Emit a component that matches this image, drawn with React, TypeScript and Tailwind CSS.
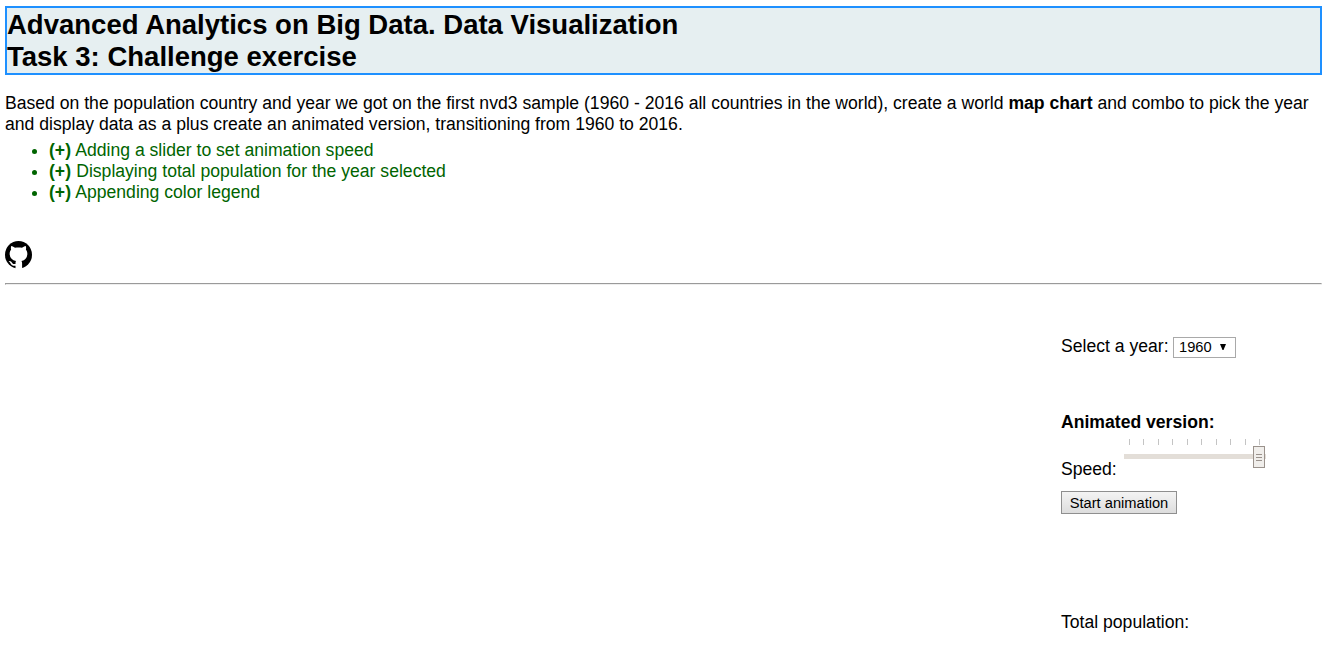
const FEATURES = [
  "Adding a slider to set animation speed",
  "Displaying total population for the year selected",
  "Appending color legend",
];

const TICKS = [5, 19, 34, 48, 63, 77, 92, 106, 121, 135];

function SpeedSlider() {
  return (
    <svg className="block h-[30px] w-[142px] shrink-0" viewBox="0 0 142 30" shapeRendering="crispEdges" role="img" aria-label="Animation speed">
      {TICKS.map((x) => (
        <rect key={x} x={x} y="0" width="1" height="6" fill="#c4c4c4" />
      ))}
      <rect x="0" y="15" width="142" height="5" fill="#e3ded8" />
      <rect x="129.5" y="7.5" width="11" height="21" fill="#f0eeeb" stroke="#9a928c" />
      <path d="M132 15.5h6M132 18.5h6M132 21.5h6" stroke="#9a928c" />
    </svg>
  );
}

function GithubMark() {
  return (
    <svg className="block h-[28px] w-[27px]" viewBox="0 0 27 28" aria-label="GitHub">
      <ellipse cx="13.5" cy="13.8" rx="13.5" ry="13.8" fill="#000" />
      <path
        d="M6.2 4.9C7.6 5 9 5.9 10 6.7C12.3 6.3 14.7 6.3 17 6.7C18 5.9 19.4 5 20.8 4.9C21.2 6.4 21.2 7.6 20.9 8.7C22 10 22.5 11.5 22.3 13.6C22 17.3 20 19.3 16.5 20C17 20.8 17.1 21.5 17.1 22.5V28H10.5V24.8C7.8 25 6.4 24 5.6 22.4C5 21.2 4.3 20.6 3.6 20.2C5.2 19.6 6.4 20.7 7.2 21.9C8 23.1 9.2 23.2 10.5 22.9C10.5 21.4 10.6 20.7 11 20C7.3 19.3 5 17.3 4.7 13.6C4.5 11.5 5 10 6.1 8.7C5.8 7.6 5.8 6.4 6.2 4.9Z"
        fill="#fff"
      />
    </svg>
  );
}

export default function App() {
  return (
    <div className="h-[663px] overflow-hidden bg-white pt-[6px] pr-[3px] pl-[5px] font-['Liberation_Sans',Arial,sans-serif] text-[17.6px] leading-[21px] text-black">
      <h1 className="h-[69px] border-2 border-[#1e90ff] bg-[#e6eff1] pt-px text-[27.52px] leading-[32px] font-bold whitespace-nowrap">
        Advanced Analytics on Big Data. Data Visualization
        <br />
        Task 3: Challenge exercise
      </h1>
      <p className="mt-[18px] whitespace-nowrap">
        Based on the population country and year we got on the first nvd3 sample (1960 - 2016 all countries in the world), create a world <b>map chart</b> and combo to pick the year
        <br />
        and display data as a plus create an animated version, transitioning from 1960 to 2016.
      </p>
      <ul className="mt-[5px] list-disc pl-[44px] text-[#006400]">
        {FEATURES.map((feature) => (
          <li key={feature}>
            <b className="mr-[0.3px]">(+)</b> {feature}
          </li>
        ))}
      </ul>
      <div className="mt-[38px]">
        <GithubMark />
      </div>
      <hr className="mt-[14px] h-[2px] border border-t-[#9a9a9a] border-r-[#eeeeee] border-b-[#eeeeee] border-l-[#9a9a9a]" />

      <div className="ml-auto flex w-[261px] flex-col items-start pt-[51px]">
        <div className="flex items-start">
          <span className="w-[112px]">Select a year:</span>
          <div className="mt-px flex h-[21px] w-[63px] items-center justify-between border border-[#a9a9a9] bg-white pr-[9px] pb-px pl-[5px] text-[14.67px] leading-[17px]">
            <span>1960</span>
            <svg className="h-[6px] w-[6px]" viewBox="0 0 6 6" aria-hidden="true">
              <path d="M0 0h6L3.5 6h-1Z" />
            </svg>
          </div>
        </div>
        <b className="mt-[54px]">Animated version:</b>
        <div className="mt-[6px] flex items-start">
          <span className="mt-[20px] w-[63px]">Speed:</span>
          <SpeedSlider />
        </div>
        <button className="mt-[11px] h-[23px] w-[116px] border border-[#8f8f8f] bg-linear-to-b from-[#f4f4f4] to-[#dddddd] pt-[2px] text-[14.67px] leading-[17px] whitespace-nowrap">Start animation</button>
        <span className="mt-[98px]">Total population:</span>
      </div>
    </div>
  );
}
